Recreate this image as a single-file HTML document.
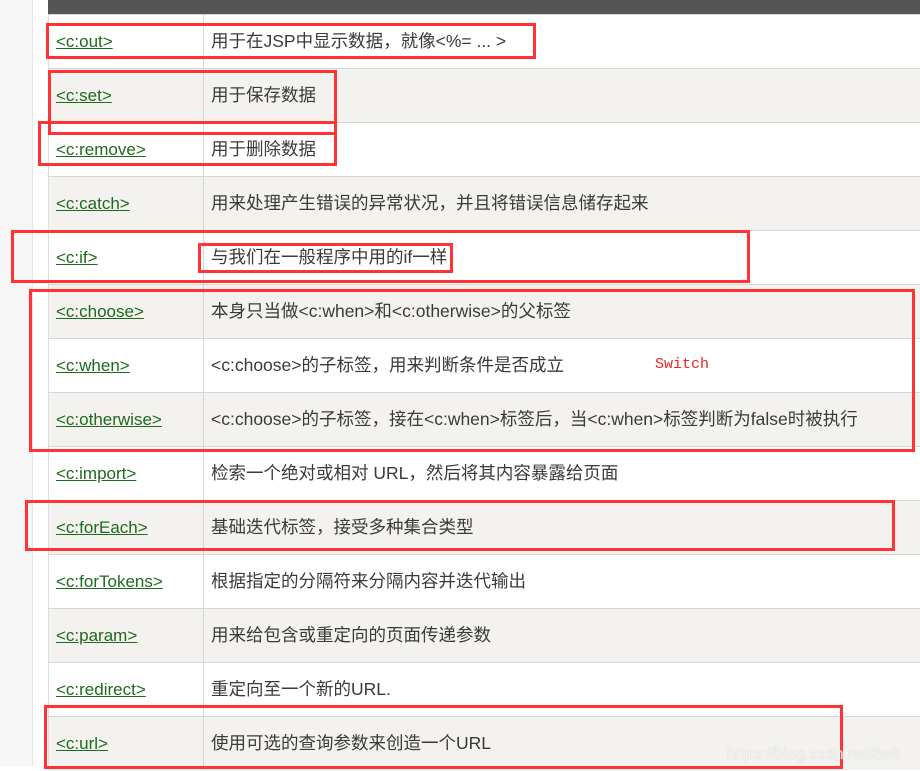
<!DOCTYPE html>
<html><head><meta charset="utf-8"><style>
*{margin:0;padding:0;box-sizing:border-box}
body{width:920px;height:766px;overflow:hidden;background:#fff;position:relative;font-family:"Liberation Sans","Noto Sans CJK SC",sans-serif;font-size:17px;color:#3a3a3a}
.strip{position:absolute;left:0;top:0;width:33px;height:766px;background:#f6f6f6;border-right:1px solid #e6e6e6}
.hdr{position:absolute;left:48px;top:0;width:872px;height:14px;background:#555}
.row{position:absolute;left:48px;width:872px;height:54px;border-top:1px solid #d6d6d6;border-left:1px solid #ddd}
.g{background:#f4f2ef}
.row .a{position:absolute;left:7px;top:0;line-height:54px;color:#1d6b1d;text-decoration:underline}
.row .d{position:absolute;left:162px;top:-1px;line-height:54px;white-space:nowrap;font-size:17.5px}
.row:before{content:"";position:absolute;left:154px;top:0;bottom:0;border-left:1px solid #d6d6d6}
.box{position:absolute;border:3px solid #f33}
.sw{position:absolute;left:655px;top:356px;color:#e22;font-family:"Liberation Mono",monospace;font-size:15px}
.wm{position:absolute;left:727px;top:746px;color:rgba(255,255,255,.8);font-size:16px;text-shadow:0 0 1px #bbb}
</style></head><body>
<div class="strip"></div>
<div class="hdr"></div>
<div class="row" style="top:14px"><span class="a">&lt;c:out&gt;</span><span class="d">用于在JSP中显示数据，就像&lt;%= ... &gt;</span></div>
<div class="row g" style="top:68px"><span class="a">&lt;c:set&gt;</span><span class="d">用于保存数据</span></div>
<div class="row" style="top:122px"><span class="a">&lt;c:remove&gt;</span><span class="d">用于删除数据</span></div>
<div class="row g" style="top:176px"><span class="a">&lt;c:catch&gt;</span><span class="d">用来处理产生错误的异常状况，并且将错误信息储存起来</span></div>
<div class="row" style="top:230px"><span class="a">&lt;c:if&gt;</span><span class="d">与我们在一般程序中用的if一样</span></div>
<div class="row g" style="top:284px"><span class="a">&lt;c:choose&gt;</span><span class="d">本身只当做&lt;c:when&gt;和&lt;c:otherwise&gt;的父标签</span></div>
<div class="row" style="top:338px"><span class="a">&lt;c:when&gt;</span><span class="d">&lt;c:choose&gt;的子标签，用来判断条件是否成立</span></div>
<div class="row g" style="top:392px"><span class="a">&lt;c:otherwise&gt;</span><span class="d">&lt;c:choose&gt;的子标签，接在&lt;c:when&gt;标签后，当&lt;c:when&gt;标签判断为false时被执行</span></div>
<div class="row" style="top:446px"><span class="a">&lt;c:import&gt;</span><span class="d">检索一个绝对或相对 URL，然后将其内容暴露给页面</span></div>
<div class="row g" style="top:500px"><span class="a">&lt;c:forEach&gt;</span><span class="d">基础迭代标签，接受多种集合类型</span></div>
<div class="row" style="top:554px"><span class="a">&lt;c:forTokens&gt;</span><span class="d">根据指定的分隔符来分隔内容并迭代输出</span></div>
<div class="row g" style="top:608px"><span class="a">&lt;c:param&gt;</span><span class="d">用来给包含或重定向的页面传递参数</span></div>
<div class="row" style="top:662px"><span class="a">&lt;c:redirect&gt;</span><span class="d">重定向至一个新的URL.</span></div>
<div class="row g" style="top:716px"><span class="a">&lt;c:url&gt;</span><span class="d">使用可选的查询参数来创造一个URL</span></div>
<div class="sw">Switch</div>
<div class="box" style="left:46px;top:23px;width:490px;height:36px"></div>
<div class="box" style="left:48px;top:70px;width:289px;height:65px"></div>
<div class="box" style="left:38px;top:121px;width:299px;height:45px"></div>
<div class="box" style="left:11px;top:230px;width:739px;height:53px"></div>
<div class="box" style="left:198px;top:243px;width:255px;height:30px"></div>
<div class="box" style="left:29px;top:289px;width:886px;height:163px"></div>
<div class="box" style="left:25px;top:500px;width:870px;height:51px"></div>
<div class="box" style="left:44px;top:705px;width:799px;height:64px"></div>
<div class="wm">https://blog.csdn.net/bell</div>
</body></html>
